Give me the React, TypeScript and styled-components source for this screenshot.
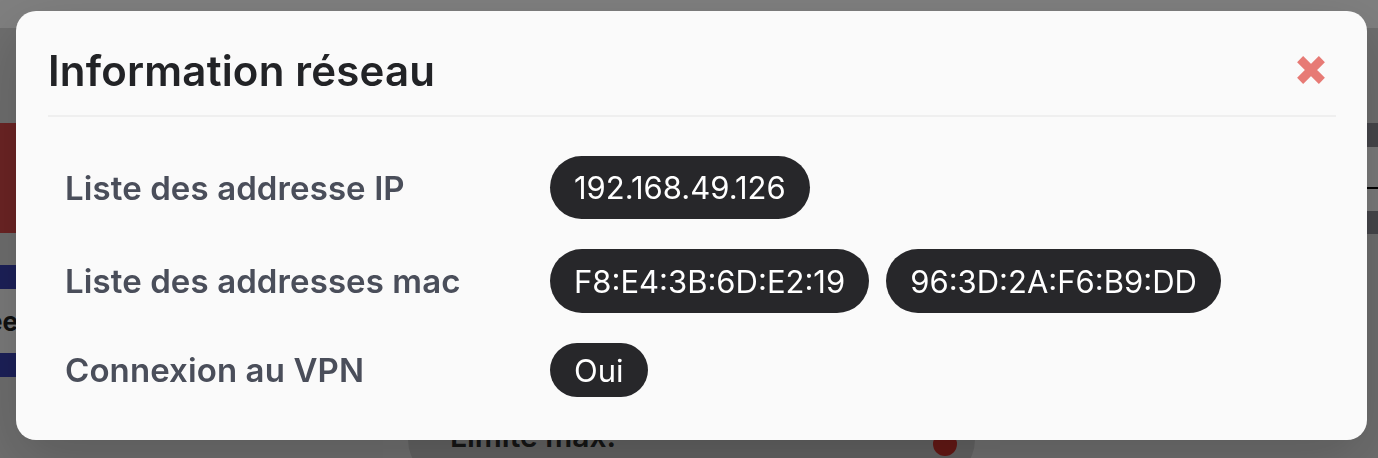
import React from "react";
import styled, { createGlobalStyle } from "styled-components";

const GlobalStyle = createGlobalStyle`
  * {
    box-sizing: border-box;
  }

  body {
    margin: 0;
    font-family: Inter, "Noto Sans", sans-serif;
    background: #dcdcdc;
  }
`;

// ---- page behind the modal ----

const Page = styled.div`
  height: 458px;
  display: flex;
  flex-direction: column;
  background: #dcdcdc;
  overflow: hidden;
`;

const TopBar = styled.header`
  height: 28px;
  flex-shrink: 0;
  background: #ffffff;
`;

const Main = styled.div`
  flex: 1;
  display: flex;
`;

const Rail = styled.aside<{ $width: number }>`
  width: ${({ $width }) => $width}px;
  flex-shrink: 0;
  display: flex;
  flex-direction: column;
  padding-top: 95px;
  overflow: hidden;
`;

const Band = styled.div<{ $h: number; $bg: string; $mt?: number }>`
  height: ${({ $h }) => $h}px;
  margin-top: ${({ $mt }) => $mt || 0}px;
  background: ${({ $bg }) => $bg};
  flex-shrink: 0;
`;

const FieldLabel = styled.div`
  height: 64px;
  background: #f4f4f4;
  display: flex;
  align-items: center;
  justify-content: flex-end;
  font-size: 26px;
  font-weight: 700;
  color: #222;
  white-space: nowrap;
`;

const Center = styled.section`
  flex: 1;
  display: flex;
  flex-direction: column;
  padding: 357px 0 0 365px;
`;

const Panel = styled.div`
  width: 617px;
  height: 130px;
  flex-shrink: 0;
  background: #dedede;
  padding: 15px 25px 0;
`;

const LimitCard = styled.div`
  height: 80px;
  border-radius: 40px;
  background: #c4c4c4;
  display: flex;
  align-items: center;
  justify-content: space-between;
  padding: 0 18px 8px 42px;
  font-size: 30px;
  font-weight: 600;
  color: #2a2a2a;
`;

const Dot = styled.span`
  width: 24px;
  height: 24px;
  margin-top: 16px;
  border-radius: 50%;
  background: #c8302a;
`;

// ---- modal ----

const Overlay = styled.div`
  position: fixed;
  inset: 0;
  background: rgba(0, 0, 0, 0.5);
  display: flex;
  align-items: flex-start;
  padding: 11px 0 0 16px;
`;

const Modal = styled.div`
  width: 1351px;
  height: 429px;
  background: #fafafa;
  border-radius: 20px;
  padding: 0 31px 0 32px;
  display: flex;
  flex-direction: column;
  box-shadow: 0 20px 60px rgba(0, 0, 0, 0.18);
`;

const Header = styled.div`
  height: 106px;
  flex-shrink: 0;
  display: flex;
  align-items: center;
  justify-content: space-between;
  padding-top: 14px;
  border-bottom: 2px solid #efefef;
`;

const Title = styled.h2`
  margin: 0;
  font-size: 42px;
  font-weight: 600;
  color: #222326;
  letter-spacing: 0.2px;
`;

const CloseButton = styled.button`
  border: 0;
  padding: 0;
  margin-right: 9px;
  background: none;
  cursor: pointer;
  display: flex;
`;

const Body = styled.div`
  display: grid;
  grid-template-columns: 485px 1fr;
  align-items: center;
  row-gap: 30px;
  padding: 39px 0 0 17px;
`;

const Label = styled.div`
  font-size: 33px;
  font-weight: 600;
  color: #4a4e5a;
  letter-spacing: 0.1px;
`;

const Pills = styled.div`
  display: flex;
  gap: 17px;
`;

const Pill = styled.span<{ $h: number }>`
  height: ${({ $h }) => $h}px;
  display: inline-flex;
  align-items: center;
  padding: 0 24px;
  border-radius: 999px;
  background: #27272a;
  color: #ffffff;
  font-size: 31px;
  font-weight: 400;
`;

const CloseIcon = () => (
  <svg width="32" height="32" viewBox="0 0 30 30">
    <path
      d="M4.8 4.8 L25.2 25.2 M25.2 4.8 L4.8 25.2"
      stroke="#e77a75"
      strokeWidth="8"
      strokeLinecap="butt"
    />
  </svg>
);

const rows = [
  { label: "Liste des addresse IP", values: ["192.168.49.126"], h: 63 },
  {
    label: "Liste des addresses mac",
    values: ["F8:E4:3B:6D:E2:19", "96:3D:2A:F6:B9:DD"],
    h: 64,
  },
  { label: "Connexion au VPN", values: ["Oui"], h: 54 },
];

const App: React.FC = () => {
  return (
    <>
      <GlobalStyle />
      <Page>
        <TopBar />
        <Main>
          <Rail $width={18}>
            <Band $h={110} $bg='#d64848' />
            <Band $h={24} $bg='#3840b0' $mt={32} />
            <FieldLabel>Durée</FieldLabel>
            <Band $h={24} $bg='#3840b0' />
          </Rail>
          <Center>
            <Panel>
              <LimitCard>
                Limite max.
                <Dot />
              </LimitCard>
            </Panel>
          </Center>
          <Rail $width={11}>
            <Band $h={24} $bg='#8c8c94' />
            <Band $h={40} $bg='#f4f4f4' />
            <Band $h={2} $bg='#000000' />
            <Band $h={22} $bg='#f4f4f4' />
            <Band $h={23} $bg='#8c8c94' />
          </Rail>
        </Main>
      </Page>

      <Overlay>
        <Modal>
          <Header>
            <Title>Information réseau</Title>
            <CloseButton aria-label='Fermer'>
              <CloseIcon />
            </CloseButton>
          </Header>
          <Body>
            {rows.map((row) => (
              <React.Fragment key={row.label}>
                <Label>{row.label}</Label>
                <Pills>
                  {row.values.map((v) => (
                    <Pill key={v} $h={row.h}>
                      {v}
                    </Pill>
                  ))}
                </Pills>
              </React.Fragment>
            ))}
          </Body>
        </Modal>
      </Overlay>
    </>
  );
};

export default App;
